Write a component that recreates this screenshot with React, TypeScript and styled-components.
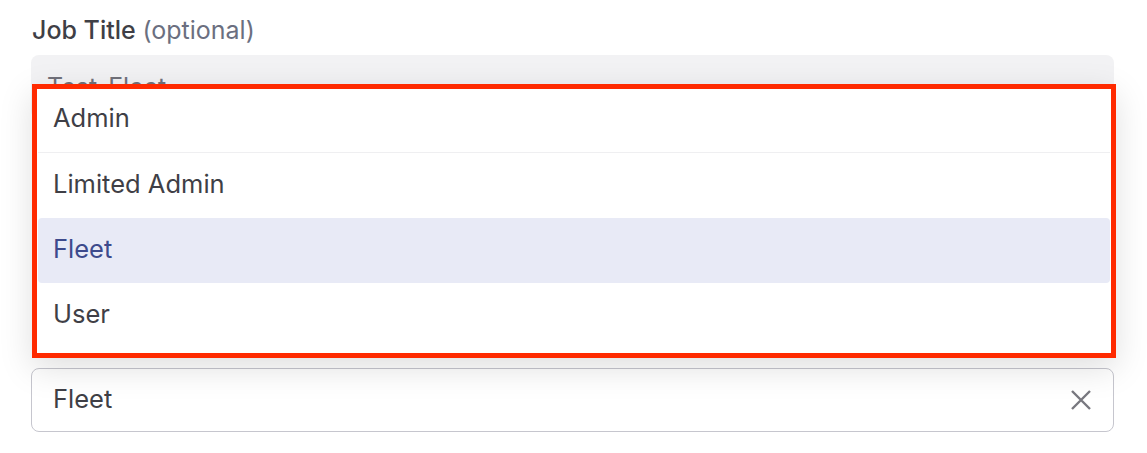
import React from "react";
import styled, { createGlobalStyle } from "styled-components";

const GlobalStyle = createGlobalStyle`
  body {
    margin: 0;
    background: #fff;
    font-family: Inter, "Liberation Sans", sans-serif;
    color: #3f3f46;
  }
`;

const Page = styled.div`
  padding: 15px 33px 0 31px;
`;

const Label = styled.div`
  font-size: 25px;
  font-weight: 500;
  color: #3f3f46;
  line-height: 30px;
  margin-bottom: 10px;
  padding-left: 1px;
`;

const Hint = styled.span`
  font-weight: 400;
  color: #6b6f80;
`;

const ReadonlyInput = styled.div`
  height: 64px;
  box-sizing: border-box;
  border-radius: 8px;
  background: #f2f2f4;
  padding: 0 16px;
  display: flex;
  align-items: center;
  font-size: 25px;
  color: #71717a;
`;

const Gap = styled.div`
  height: 249px;
`;

const SelectWrap = styled.div`
  position: relative;
`;

const SelectBox = styled.div`
  height: 64px;
  box-sizing: border-box;
  border: 1px solid #c6c6ce;
  border-radius: 8px;
  background: #fff;
  padding: 0 21px 3px;
  display: flex;
  align-items: center;
  justify-content: space-between;
  font-size: 25.5px;
  color: #3f3f46;
`;

const ClearButton = styled.button`
  border: none;
  background: transparent;
  padding: 3px 0 0;
  display: flex;
  color: #78787f;
  margin-right: -1px;
`;

const Menu = styled.ul`
  position: absolute;
  left: 1px;
  right: -2px;
  bottom: calc(100% + 10px);
  margin: 0;
  padding: 0 0 5px 0;
  list-style: none;
  background: #fff;
  border: 5px solid #ff2a00;
  box-shadow: 0 10px 32px rgba(0, 0, 0, 0.13);
`;

const Option = styled.li<{ $active?: boolean; $first?: boolean }>`
  height: ${({ $first }) => ($first ? "64px" : "65px")};
  box-sizing: border-box;
  display: flex;
  align-items: center;
  padding: ${({ $first }) => ($first ? "0 15px 6px" : "0 15px 4px")};
  margin: 0 1px;
  font-size: 25.5px;
  border-radius: ${({ $active }) => ($active ? "4px" : "0")};
  background: ${({ $active }) => ($active ? "#e8eaf6" : "transparent")};
  color: ${({ $active }) => ($active ? "#3d4a8c" : "#3f3f46")};
  border-bottom: ${({ $first }) => ($first ? "1px solid #efeff1" : "none")};
`;

const roles = ["Admin", "Limited Admin", "Fleet", "User"];

export default function App() {
  const selected = "Fleet";
  return (
    <>
      <GlobalStyle />
      <Page>
        <Label>
          Job Title <Hint>(optional)</Hint>
        </Label>
        <ReadonlyInput>Test-Fleet</ReadonlyInput>
        <Gap />
        <SelectWrap>
          <Menu>
            {roles.map((r, i) => (
              <Option key={r} $active={r === selected} $first={i === 0}>
                {r}
              </Option>
            ))}
          </Menu>
          <SelectBox>
            {selected}
            <ClearButton type="button" aria-label="Clear">
              <svg width="24" height="24" viewBox="0 0 24 24" fill="none">
                <path
                  d="M3 3L21 21M21 3L3 21"
                  stroke="currentColor"
                  strokeWidth="2.4"
                  strokeLinecap="butt"
                />
              </svg>
            </ClearButton>
          </SelectBox>
        </SelectWrap>
      </Page>
    </>
  );
}
